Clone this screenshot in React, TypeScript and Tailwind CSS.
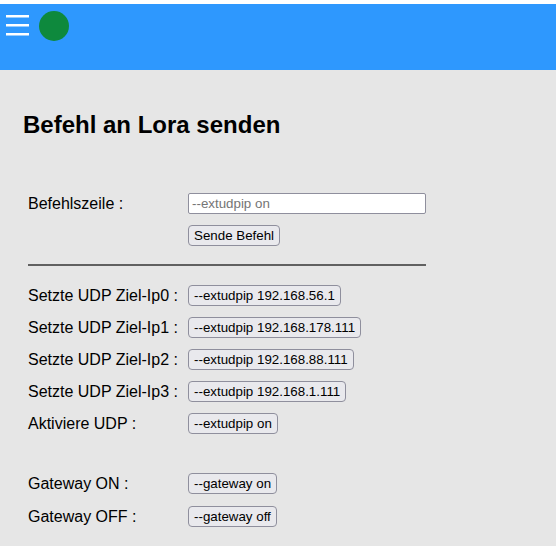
import React from "react";

const Cmd = ({ label }: { label: string }) => (
  <button className="h-[21px] px-[5px] border border-[#8f8f9d] rounded-[4px] bg-[#e9e9ed] text-[13.33px] leading-none text-black whitespace-nowrap">
    {label}
  </button>
);

const Row = ({ label, cmd, className }: { label: string; cmd: string; className: string }) => (
  <div className={`flex items-center h-[21px] ${className}`}>
    <span className="w-[160px] text-[16px] leading-[18px]">{label}</span>
    <Cmd label={cmd} />
  </div>
);

export default function App() {
  return (
    <div className="min-h-screen bg-[#e6e6e6] font-['Liberation_Sans',Arial,sans-serif] text-black">
      <div className="h-[4px] bg-white" />
      <header className="h-[66px] bg-[#2e98fe] flex items-start pt-[7px] pl-[6px] gap-[10px]">
        <svg width="23" height="30" viewBox="0 0 23 30">
          <rect x="0" y="4" width="23" height="2.5" fill="#fff" />
          <rect x="0" y="13" width="23" height="2.5" fill="#fff" />
          <rect x="0" y="22" width="23" height="2.5" fill="#fff" />
        </svg>
        <div className="w-[30px] h-[30px] rounded-full bg-[#0e893d]" />
      </header>
      <main className="pt-[41px] pb-[19px]">
        <h2 className="ml-[23px] text-[24px] font-bold leading-[28px]">Befehl an Lora senden</h2>
        <div className="mt-[54px] ml-[28px] flex flex-col">
          <div className="flex items-center h-[21px]">
            <span className="w-[160px] text-[16px] leading-[18px]">Befehlszeile :</span>
            <input
              className="w-[238px] h-[21px] px-[3px] bg-white border border-[#8f8f9d] rounded-[2px] text-[13.33px] placeholder:text-[#757575] outline-none"
              placeholder="--extudpip on"
            />
          </div>
          <div className="flex mt-[11px] pl-[160px]">
            <Cmd label="Sende Befehl" />
          </div>
          <div className="mt-[18px] w-[398px] h-[2px] bg-[#616161]" />
          <Row className="mt-[19px]" label="Setzte UDP Ziel-Ip0 :" cmd="--extudpip 192.168.56.1" />
          <Row className="mt-[11px]" label="Setzte UDP Ziel-Ip1 :" cmd="--extudpip 192.168.178.111" />
          <Row className="mt-[11px]" label="Setzte UDP Ziel-Ip2 :" cmd="--extudpip 192.168.88.111" />
          <Row className="mt-[11px]" label="Setzte UDP Ziel-Ip3 :" cmd="--extudpip 192.168.1.111" />
          <Row className="mt-[11px]" label="Aktiviere UDP :" cmd="--extudpip on" />
          <Row className="mt-[39px]" label="Gateway ON :" cmd="--gateway on" />
          <Row className="mt-[12px]" label="Gateway OFF :" cmd="--gateway off" />
        </div>
      </main>
    </div>
  );
}
